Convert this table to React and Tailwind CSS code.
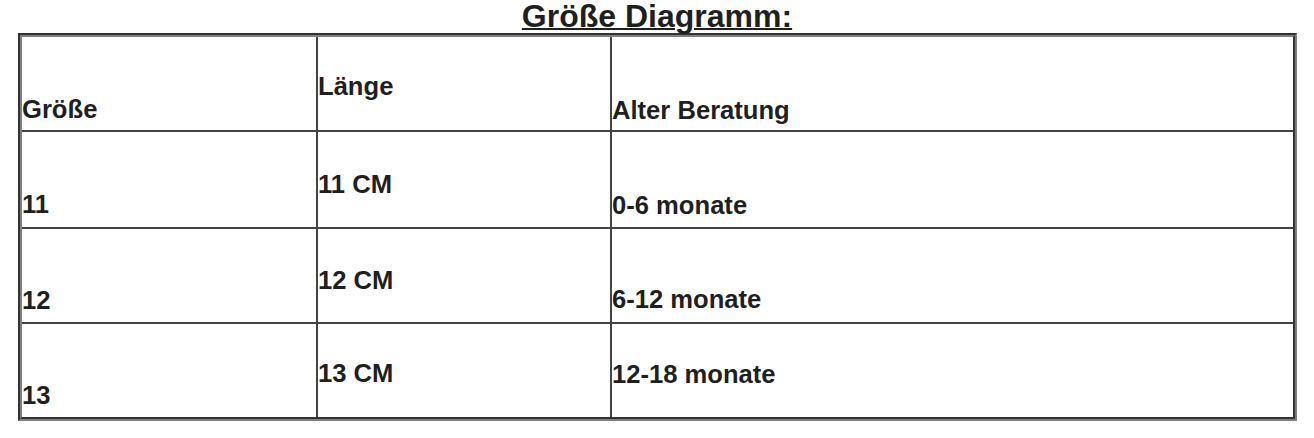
const rows = [
  {
    h: "h-[95px]",
    cells: [
      { text: "Größe", pos: "justify-end pb-[6px]" },
      { text: "Länge", pos: "justify-start pt-[34px]" },
      { text: "Alter Beratung", pos: "justify-end pb-[5px]" },
    ],
  },
  {
    h: "h-[97px]",
    cells: [
      { text: "11", pos: "justify-end pb-[8px]" },
      { text: "11 CM", pos: "justify-start pt-[37px]" },
      { text: "0-6 monate", pos: "justify-end pb-[7px]" },
    ],
  },
  {
    h: "h-[95px]",
    cells: [
      { text: "12", pos: "justify-end pb-[7px]" },
      { text: "12 CM", pos: "justify-start pt-[36px]" },
      { text: "6-12 monate", pos: "justify-end pb-[8px]" },
    ],
  },
  {
    h: "h-[93px]",
    cells: [
      { text: "13", pos: "justify-end pb-[7px]" },
      { text: "13 CM", pos: "justify-start pt-[34px]" },
      { text: "12-18 monate", pos: "justify-start pt-[35px]" },
    ],
  },
];

const colWidths = ["w-[296px] border-r-2", "w-[294px] border-r-2", "flex-1"];

const App = () => {
  return (
    <div className="w-[1314px] h-[438px] bg-white text-[#1f1f1f] font-['Liberation_Sans',Arial,sans-serif] overflow-hidden">
      <h2 className="text-center text-[32px] leading-[32px] font-bold underline decoration-2 mb-[1px]">
        Größe Diagramm:
      </h2>
      <div className="ml-[18px] mr-[17px] border-2 border-t-[#333333] border-l-[#333333] border-r-[#808080] border-b-[#808080]">
        <div className="border-2 border-t-[#808080] border-l-[#808080] border-r-[#333333] border-b-[#333333]">
          {rows.map((row, i) => (
            <div
              key={i}
              className={`flex flex-row ${row.h} ${
                i < rows.length - 1 ? "border-b-2 border-[#444444]" : ""
              }`}
            >
              {row.cells.map((cell, j) => (
                <div
                  key={j}
                  className={`${colWidths[j]} border-[#444444] flex flex-col ${cell.pos}`}
                >
                  <span className="text-[25.6px] leading-[30px] font-bold">
                    {cell.text}
                  </span>
                </div>
              ))}
            </div>
          ))}
        </div>
      </div>
    </div>
  );
};

export default App;
